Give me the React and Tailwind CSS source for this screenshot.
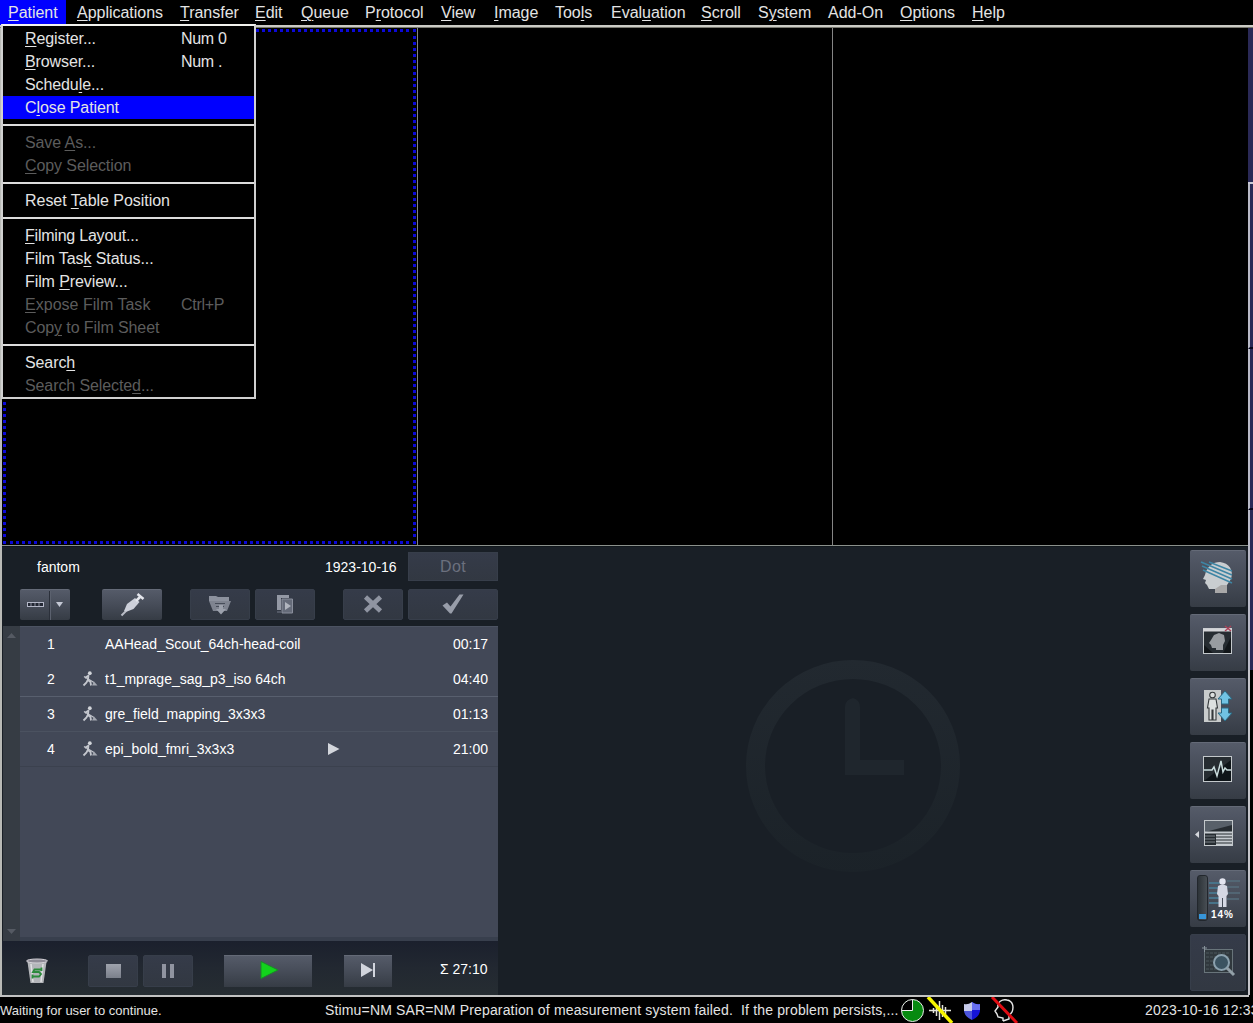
import React from "react";

const MENUS = [
  ["Patient", 0, "w-[66px] bg-[#0000ff] mr-[3px]"],
  ["Applications", 0, "w-[103px]"],
  ["Transfer", 0, "w-[75px]"],
  ["Edit", 0, "w-[46px]"],
  ["Queue", 0, "w-[64px]"],
  ["Protocol", 1, "w-[76px]"],
  ["View", 0, "w-[53px]"],
  ["Image", 0, "w-[61px]"],
  ["Tools", 3, "w-[56px]"],
  ["Evaluation", 4, "w-[90px]"],
  ["Scroll", 0, "w-[57px]"],
  ["System", 1, "w-[70px]"],
  ["Add-On", -1, "w-[72px]"],
  ["Options", 0, "w-[72px]"],
  ["Help", 0, "w-[50px]"],
];

const ITEMS = [
  { t: "Register...", u: 0, k: "Num 0" },
  { t: "Browser...", u: 0, k: "Num ." },
  { t: "Schedule...", u: 6 },
  { t: "Close Patient", u: 1, active: true },
  null,
  { t: "Save As...", u: 5, off: true },
  { t: "Copy Selection", u: 0, off: true },
  null,
  { t: "Reset Table Position", u: 6, sp: "tracking-[-0.03px]" },
  null,
  { t: "Filming Layout...", u: 0, sp: "tracking-[-0.22px]" },
  { t: "Film Task Status...", u: 8 },
  { t: "Film Preview...", u: 5 },
  { t: "Expose Film Task", u: 0, k: "Ctrl+P", off: true, sp: "tracking-[0.02px]" },
  { t: "Copy to Film Sheet", u: 3, off: true },
  null,
  { t: "Search", u: 5 },
  { t: "Search Selected...", u: 14, off: true },
];

function Mnemonic({ text, at }) {
  if (at < 0) return <span>{text}</span>;
  return (
    <span>
      {text.slice(0, at)}
      <span className="underline decoration-1 underline-offset-2">{text[at]}</span>
      {text.slice(at + 1)}
    </span>
  );
}

function MenuBar() {
  return (
    <div className="flex h-[25px] shrink-0 bg-black text-[16px] leading-[25px] tracking-[-0.02px] text-[#e4e4e4]">
      {MENUS.map(([t, u, c]) => (
        <div key={t} className={`h-[25px] shrink-0 whitespace-nowrap pl-[8px] ${c}`}>
          <Mnemonic text={t} at={u} />
        </div>
      ))}
    </div>
  );
}

function PatientMenu() {
  return (
    <div className="absolute left-[1px] top-[24px] z-10 w-[255px] border-2 border-[#d0d0d0] border-t-[#f2f2ee] bg-black pt-[1px] text-[16px] leading-[23px]">
      {ITEMS.map((it, i) =>
        it ? (
          <div
            key={i}
            className={`flex h-[23px] whitespace-nowrap pl-[22px] ${it.active ? "bg-[#0000ff]" : ""} ${it.off ? "text-[#5c5c5c]" : "text-[#e4e4e4]"}`}
          >
            <div className={`w-[156px] ${it.sp || "tracking-[-0.1px]"}`}>
              <Mnemonic text={it.t} at={it.u} />
            </div>
            {it.k && <div className="tracking-[-0.3px]">{it.k}</div>}
          </div>
        ) : (
          <div key={i} className="flex h-[12px] items-center">
            <div className="h-[2px] w-full bg-[#dcdcdc]" />
          </div>
        )
      )}
    </div>
  );
}

const RAISED = "bg-linear-to-b from-[#555b69] via-[#464c58] to-[#363c45] border-t border-[#646a77]";
const FLAT = "bg-linear-to-b from-[#353b49] to-[#323842] border border-[#373e4a]";

function Btn({ raised, className, children }) {
  return (
    <div className={`flex shrink-0 items-center justify-center rounded-[2px] ${raised ? RAISED : FLAT} ${className}`}>
      {children}
    </div>
  );
}

function Worker() {
  return (
    <svg className="ml-px" width="16" height="16" viewBox="0 0 16 16" fill="none" stroke="#c4c7ce" strokeWidth="1.8">
      <circle cx="7.800" cy="2.200" r="1.900" fill="#d2d5da" stroke="none" />
      <path d="M6.500 4.500L3 7M6.500 4L6 9L8.500 11L9 14.500M6 8.500L4.500 11.500L1.500 14.500" />
      <path d="M2 5.500L12 11.500" strokeWidth="1.200" />
      <path d="M10 14.500L12 10.500L15.500 14.500Z" fill="#a4a8b1" stroke="none" />
    </svg>
  );
}

function Header() {
  return (
    <div className="flex h-[37px] items-start pl-[35px] pt-[5px] text-[14px] text-white">
      <span className="w-[288px] pt-[5px]">fantom</span>
      <span className="w-[83px] pt-[5px]">1923-10-16</span>
      <Btn className="h-[29px] w-[90px] rounded-none text-[16px] tracking-[0.3px] text-[#6b707e]">Dot</Btn>
    </div>
  );
}

function Toolbar() {
  return (
    <div className="flex h-[42px] items-start pl-[18px] pt-[5px]">
      <Btn raised className="mr-[32px] h-[31px] w-[50px]">
        <svg className="-mt-px" width="50" height="30" viewBox="0 0 50 30">
          <path d="M29.500 1V30" stroke="#2b303a" />
          <path d="M30.500 1V30" stroke="#5b616e" />
          <rect x="7.500" y="12.500" width="16" height="4" fill="#222733" stroke="#b4b8c8" />
          <path d="M11 13V16M15 13V16M19 13V16" stroke="#8f94a2" />
          <path d="M36 12H43L39.500 17Z" fill="#c4c8d4" />
        </svg>
      </Btn>
      <Btn raised className="mr-[28px] h-[31px] w-[60px]">
        <svg width="28" height="26" viewBox="0 0 28 26">
          <path d="M3.500 23.500L11 16" stroke="#b9bcc6" strokeWidth="2" />
          <path d="M6 19L9 12L17 6L21.500 10L15.500 17L9 19.500Z" fill="#cdd0da" />
          <path d="M18 9L22.500 4.500" stroke="#e4e6ec" strokeWidth="2.500" />
          <path d="M19.500 2L25.500 7" stroke="#e4e6ec" strokeWidth="2.500" />
        </svg>
      </Btn>
      <Btn className="mr-[5px] h-[31px] w-[60px]">
        <svg width="26" height="22" viewBox="0 0 26 22">
          <path d="M2 4V2H9L11 3H22V7H2Z" fill="#8d929e" />
          <path d="M2 7H24L20 17H6Z" fill="#7f8490" />
          <path d="M8 9.500H18M9 12.500H17" stroke="#474d59" />
          <path d="M12 11H16V15H19L14 20.500L9 15H12Z" fill="#9ca1ac" />
        </svg>
      </Btn>
      <Btn className="mr-[28px] h-[31px] w-[60px]">
        <svg className="-mt-px" width="22" height="22" viewBox="0 0 22 22">
          <path d="M3 17V2H15V5H7V17Z" fill="#9499a5" />
          <path d="M8 6H18.500V20H8Z" fill="#656b79" stroke="#8a8f9c" />
          <path d="M11 9L17 13L11 17Z" fill="#b1b5be" />
          <path d="M3 19H7" stroke="#737986" />
        </svg>
      </Btn>
      <Btn className="mr-[5px] h-[31px] w-[60px]">
        <svg className="-mt-[2px]" width="20" height="20" viewBox="0 0 20 20">
          <path d="M2.500 3L17.500 17M17.500 3L2.500 17" stroke="#8f94a1" strokeWidth="4.600" />
        </svg>
      </Btn>
      <Btn className="h-[31px] w-[90px]">
        <svg className="-mt-px" width="24" height="22" viewBox="0 0 24 22">
          <path d="M1.500 12.500L6 9.500L9.500 13.500L18.500 1.500L22.500 1.500L10.500 20.500H9Z" fill="#989da9" />
        </svg>
      </Btn>
    </div>
  );
}

const STEPS = [
  ["1", "AAHead_Scout_64ch-head-coil", "00:17", false, "border-[#424857]"],
  ["2", "t1_mprage_sag_p3_iso 64ch", "04:40", true, "border-[#585f6e]"],
  ["3", "gre_field_mapping_3x3x3", "01:13", true, "border-[#4b5260]"],
  ["4", "epi_bold_fmri_3x3x3", "21:00", true, "border-[#3b414e]"],
];

function StepList() {
  return (
    <div className="flex h-[315px] pl-[1px]">
      <div className="flex w-[17px] flex-col items-center justify-between bg-[#363c44] py-[7px]">
        <svg width="9" height="5"><path d="M0 5H9L4.500 0Z" fill="#555a63" /></svg>
        <svg width="9" height="5"><path d="M0 0H9L4.500 5Z" fill="#555a63" /></svg>
      </div>
      <div className="w-[478px] border-b-4 border-t border-b-[#383f4d] border-t-[#4c5362] bg-[#424857] text-[14px] text-white">
        {STEPS.map(([n, name, time, worker, line]) => (
          <div key={n} className={`flex h-[35px] items-center border-b ${line}`}>
            <span className="w-[61px] pl-[27px]">{n}</span>
            <span className="w-[24px]">{worker && <Worker />}</span>
            <span className="w-[223px] whitespace-nowrap">{name}</span>
            <span className="w-[125px]">
              {n === "4" && (
                <svg width="12" height="12"><path d="M0 0L11.500 6L0 12Z" fill="#d3d6dc" /></svg>
              )}
            </span>
            <span>{time}</span>
          </div>
        ))}
      </div>
    </div>
  );
}

function Transport() {
  return (
    <div className="flex h-[54px] items-start bg-linear-to-b from-[#1b202d] via-[#222831] to-[#262d32] pl-[22px] pt-[14px]">
      <svg className="mr-[38px] mt-[2px]" width="26" height="28" viewBox="0 0 26 28">
        <path d="M3.500 5H22.500L19.500 26H6.500Z" fill="#b3b5b9" />
        <path d="M7 7L9 25M19 7L17 25" stroke="#e0e1e3" strokeWidth="1.500" />
        <ellipse cx="13" cy="4" rx="10.500" ry="2" fill="#8e8b96" stroke="#d5d3d9" />
        <path d="M17 12.500H10.500L9 15H15L17 17L15 19.500H9M17.500 10.500V14M8.500 17.500V21.500" fill="none" stroke="#2c8a3c" strokeWidth="1.800" />
      </svg>
      <Btn className="mr-[5px] h-[32px] w-[50px]">
        <div className="h-[14px] w-[15px] bg-linear-to-b from-[#9fa3ad] to-[#7b808b]" />
      </Btn>
      <Btn className="mr-[31px] h-[32px] w-[50px]">
        <div className="flex gap-[4px]">
          <div className="h-[14px] w-[4px] bg-[#9094a0]" />
          <div className="h-[14px] w-[4px] bg-[#9094a0]" />
        </div>
      </Btn>
      <Btn raised className="mr-[32px] h-[32px] w-[88px] rounded-none">
        <svg className="-mt-[3px] ml-[3px]" width="20" height="18"><path d="M1 0.500L18 9L1 17.500Z" fill="#12d31c" stroke="#188c26" /></svg>
      </Btn>
      <Btn raised className="h-[32px] w-[48px] rounded-none">
        <svg className="-mt-[3px]" width="16" height="14"><path d="M1 0L13 7L1 14Z" fill="#d2d5dd" /><path d="M14 0V14" stroke="#d2d5dd" strokeWidth="2" /></svg>
      </Btn>
      <span className="ml-[48px] mt-[4px] whitespace-nowrap text-[14px] text-white">Σ 27:10</span>
    </div>
  );
}

const Frame = () => <rect x="4.500" y="3.500" width="28" height="25" fill="#262c31" stroke="#c3c8cb" />;

const SIDE = [
  <svg className="-ml-[2px] -mt-[2px]" width="36" height="34" viewBox="0 0 36 34">
    <path d="M6 14C8 5 14 1 21 1C30 2 35 9 32 18L28 24V32H16V28L10 28L8 24L6 22L7 19L4 18Z" fill="#c9cdd0" />
    <path d="M28 24V32H16V28L22 24Z" fill="#a9a8a8" />
    <path d="M2 1L33 14M3 5L33 18M4 9L33 22M10 1L33 10" stroke="#3e85a4" strokeWidth="1.500" />
  </svg>,
  <svg className="-ml-[2px] -mt-[4px]" width="36" height="32" viewBox="0 0 36 32">
    <Frame />
    <path d="M4 5H33" stroke="#d4d5d8" strokeWidth="3" />
    <path d="M26 1L32 6M32 1L26 6" stroke="#a84259" strokeWidth="1.500" />
    <path d="M5 28V20L14 28M32 28V12L24 28Z" fill="#121619" />
    <path d="M12 15L15 10L20 8L25 10L26 16L24 20V25H17V23H13L12 20L10 18Z" fill="#989ca0" />
  </svg>,
  <svg className="-ml-[2px] -mt-[3px]" width="36" height="34" viewBox="0 0 36 34">
    <rect x="5" y="1" width="17" height="32" fill="#c9cccc" />
    <g fill="#dde0df" stroke="#35393b" strokeWidth="1.100"><circle cx="13.500" cy="6" r="2.800" /><path d="M10 10H17L18.500 19H17V31H14V21H13V31H10V19H8.500Z" /></g>
    <path d="M26 2L33 10H29.500V15H22.500V10H19Z M26 32L33 24H29.500V19H22.500V24H19Z" fill="#71c3e3" stroke="#2a6982" />
  </svg>,
  <svg className="-ml-[2px] -mt-[4px]" width="36" height="32" viewBox="0 0 36 32">
    <Frame />
    <path d="M5 28L32 7V28Z" fill="#0e1418" />
    <path d="M5 17H13L15 14L18 23L22 8L24 19L26 15L28 17H32" fill="none" stroke="#c9dcdd" strokeWidth="1.500" />
  </svg>,
  <svg className="-ml-[6px] -mt-[4px]" width="42" height="32" viewBox="-6 0 42 32">
    <path d="M-5 17.500L-1 14V21Z" fill="#d4d7dc" />
    <Frame />
    <path d="M5 4H32V8L5 15Z" fill="#586069" />
    <path d="M5 15.500H32M16 18.500H32M16 21.500H32M16 24.500H32M16 27.500H32" stroke="#c6cbd0" strokeWidth="1.800" />
    <path d="M5 19H15M5 22H15M5 25H15" stroke="#7a8188" />
  </svg>,
  <div className="flex h-full w-full pl-[7px] pt-[4px]">
    <div className="flex h-[46px] w-[11px] flex-col justify-end rounded-[3px] border border-[#22272d] bg-linear-to-r from-[#2d3338] to-[#484e54] p-px">
      <div className="h-[5px] bg-[#3795d8]" />
    </div>
    <div className="flex flex-col">
      <svg width="34" height="33" viewBox="0 0 34 33">
        <path d="M1 8H14M1 13H14M1 18H14M1 23H14M1 28H11" stroke="#487389" strokeWidth="2" />
        <path d="M19 6H32M19 12H31M19 18H32M19 24H31" stroke="#566e7c" strokeWidth="1.500" />
        <circle cx="14.500" cy="6.500" r="3.200" fill="#e3e5f0" />
        <path d="M10 11Q14.500 8 19 11L20 19L18.500 21V32H15V23H14V32H10.500V21L9 19Z" fill="#d5d8e4" />
      </svg>
      <div className="pl-[3px] text-[10px] font-bold leading-[13px] tracking-[0.9px] text-white">14%</div>
    </div>
  </div>,
  <svg className="-mt-[2px]" width="38" height="34" viewBox="0 0 38 34">
    <rect x="5.500" y="4.500" width="28" height="23" fill="#30383d" stroke="#68747a" />
    <path d="M7 8H31M7 12H31M7 16H31M7 20H31M7 24H31" stroke="#4b565d" strokeDasharray="3 1" />
    <path d="M3 3H8M5.500 1V7" stroke="#87929a" />
    <circle cx="22.500" cy="17.500" r="7.500" fill="#3b5361" stroke="#8ba1ae" strokeWidth="2" />
    <path d="M28 23L35 30" stroke="#93a0a8" strokeWidth="3" />
  </svg>,
];

function SideBar() {
  return (
    <div className="flex w-[58px] flex-col gap-[7px] pt-[3px]">
      {SIDE.map((icon, i) => (
        <Btn key={i} raised={i < 6} className="h-[57px] w-[56px]">
          {icon}
        </Btn>
      ))}
    </div>
  );
}

function Clock() {
  return (
    <svg width="218" height="218" viewBox="0 0 218 218" fill="none">
      <defs>
        <linearGradient id="dial" x1="0" y1="0" x2="0" y2="218" gradientUnits="userSpaceOnUse">
          <stop offset="0" stopColor="#222930" />
          <stop offset="1" stopColor="#1b2228" />
        </linearGradient>
      </defs>
      <ellipse cx="109" cy="107" rx="97.500" ry="96.500" stroke="url(#dial)" strokeWidth="19" />
      <path d="M101 116V48Q101 41 109 39Q116 41 116 48V101H160V116Z" fill="#1f262d" />
    </svg>
  );
}

function Edge() {
  return (
    <div className="flex w-[5px] shrink-0 flex-col bg-[#2a2956]">
      <div className="h-[156px] border-b-2 border-[#c9c9d5]" />
      <div className="h-[165px] border-b-2 border-l-2 border-b-[#05051c] border-l-[#b9bac7]" />
      <div className="h-[161px] border-b-2 border-l-2 border-b-[#05051c] border-l-[#b9bac7]" />
      <div className="h-[160px] border-l-2 border-[#b9bac7]" />
      <div className="grow border-l-2 border-[#c5c5ca] bg-black" />
    </div>
  );
}

function StatusBar() {
  return (
    <div className="flex h-[26px] shrink-0 overflow-hidden whitespace-nowrap bg-black text-[14px] leading-[27px] text-[#e4e4e4]">
      <span className="w-[325px] shrink-0 text-[13px] tracking-[0.01px]">Waiting for user to continue.</span>
      <span className="w-[575px] shrink-0 whitespace-pre tracking-[0.155px]">Stimu=NM SAR=NM Preparation of measurement system failed.  If the problem persists,...</span>
      <svg className="shrink-0" width="120" height="26" viewBox="900 0 120 26">
        <circle cx="912.500" cy="13.500" r="11" fill="#078a10" />
        <path d="M912.500 13.500V2.500A11 11 0 0 0 901.500 13.500Z" fill="#000" />
        <path d="M912.500 2.500V13.500H901.500" fill="none" stroke="#ececec" />
        <circle cx="912.500" cy="13.500" r="11" fill="none" stroke="#ececec" />
        <path d="M929 13.500H951M933.500 11V16M936.500 8V19M939.500 4V23M942.500 8V20M945.500 10V17" stroke="#e5e5dc" strokeWidth="1.500" />
        <path d="M928 0L952 26" stroke="#f7f500" strokeWidth="3.500" />
        <path d="M972 5Q976 8 980 7V14Q979 20 972 23Z" fill="#1514d8" />
        <path d="M972 5Q968 8 964 7V14H972Z" fill="#c7cbea" />
        <path d="M964 14H972V23Q965 20 964 14Z" fill="#4b54dc" />
        <path d="M972 5Q976 8 980 7V13H972Z" fill="#686ff0" />
        <path d="M1003 24V21L998 20L997 17L995 14L998 10C997 5 1002 2 1007 3C1013 4 1014 10 1012 15L1009 19V22L1003 24" fill="none" stroke="#e8e8e8" strokeWidth="1.400" />
        <path d="M992 0L1017 26" stroke="#e00d13" strokeWidth="3" />
      </svg>
      <span className="ml-[125px] tracking-[0.2px]">2023-10-16 12:33</span>
    </div>
  );
}

export default function App() {
  return (
    <div className="relative flex h-[1023px] w-[1253px] flex-col overflow-hidden bg-black font-['Liberation_Sans',Arial,sans-serif]">
      <MenuBar />
      <PatientMenu />
      <div className="h-[3px] shrink-0 border-b border-[#77776f] bg-[#cbcbc5]" />
      <div className="flex h-[967px] shrink-0">
        <div className="flex w-[1248px] flex-col border-l-2 border-[#b9bab6]">
          <div className="flex h-[518px] shrink-0 border-b border-[#8b918c]">
            <div className="w-[416px] border-r border-[#858585] p-px">
              <div className="h-[515px] w-[413px] border-[3px] border-dotted border-[#0b08d8]" />
            </div>
            <div className="w-[415px] border-r border-[#858585]" />
          </div>
          <div className="flex h-[449px] border-t border-[#11171c] bg-[#191f26]">
            <div className="flex w-[496px] flex-col">
              <Header />
              <Toolbar />
              <StepList />
              <Transport />
            </div>
            <div className="flex grow items-center justify-center pb-[7px] pl-[18px]">
              <Clock />
            </div>
            <SideBar />
          </div>
        </div>
        <Edge />
      </div>
      <div className="h-[2px] w-[1249px] shrink-0 bg-[#c2c2c2]" />
      <StatusBar />
    </div>
  );
}
